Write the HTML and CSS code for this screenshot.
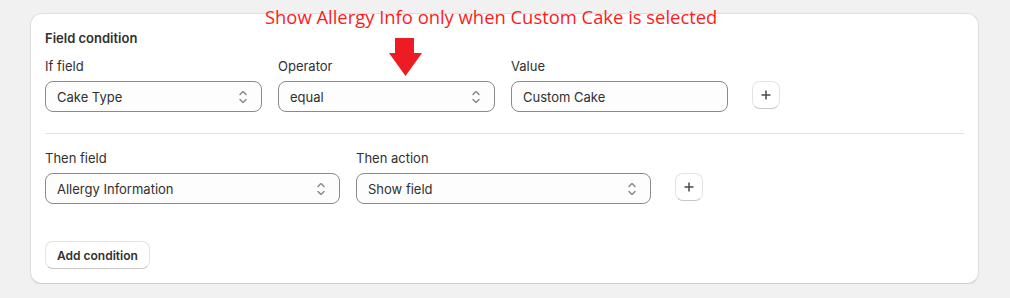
FILE: index.html
```html
<!DOCTYPE html>
<html lang="en">
<head>
    <meta charset="UTF-8">
    <meta name="viewport" content="width=device-width, initial-scale=1.0">
    <title>Field condition</title>
    <link rel="stylesheet" href="styles.css">
</head>
<body>

    <div class="page">
        <div class="card">
            <h3 class="card-title">Field condition</h3>

            <!-- If condition -->
            <div class="row">
                <div class="field narrow">
                    <label>If field</label>
                    <div class="select">
                        <span>Cake Type</span>
                        <svg class="select-icon" viewBox="0 0 20 20"><path d="M10.884 4.323a1.25 1.25 0 0 0-1.768 0l-2.646 2.647a.75.75 0 0 0 1.06 1.06l2.47-2.47 2.47 2.47a.75.75 0 1 0 1.06-1.06l-2.646-2.647Z"/><path d="m13.53 13.03-2.646 2.647a1.25 1.25 0 0 1-1.768 0l-2.646-2.647a.75.75 0 0 1 1.06-1.06l2.47 2.47 2.470-2.47a.75.75 0 0 1 1.06 1.06Z"/></svg>
                    </div>
                </div>
                <div class="field narrow">
                    <label>Operator</label>
                    <div class="select">
                        <span>equal</span>
                        <svg class="select-icon" viewBox="0 0 20 20"><path d="M10.884 4.323a1.25 1.25 0 0 0-1.768 0l-2.646 2.647a.75.75 0 0 0 1.06 1.06l2.47-2.47 2.47 2.47a.75.75 0 1 0 1.06-1.06l-2.646-2.647Z"/><path d="m13.53 13.03-2.646 2.647a1.25 1.25 0 0 1-1.768 0l-2.646-2.647a.75.75 0 0 1 1.06-1.06l2.47 2.47 2.47-2.47a.75.75 0 0 1 1.06 1.06Z"/></svg>
                    </div>
                </div>
                <div class="field narrow">
                    <label>Value</label>
                    <div class="select text-input">
                        <span>Custom Cake</span>
                    </div>
                </div>
                <button class="icon-btn">
                    <svg viewBox="0 0 12 12"><path d="M6 1.5v9M1.5 6h9"/></svg>
                </button>
            </div>

            <hr class="divider">

            <!-- Then action -->
            <div class="row">
                <div class="field wide">
                    <label>Then field</label>
                    <div class="select">
                        <span>Allergy Information</span>
                        <svg class="select-icon" viewBox="0 0 20 20"><path d="M10.884 4.323a1.25 1.25 0 0 0-1.768 0l-2.646 2.647a.75.75 0 0 0 1.06 1.06l2.47-2.47 2.47 2.47a.75.75 0 1 0 1.06-1.06l-2.646-2.647Z"/><path d="m13.53 13.03-2.646 2.647a1.25 1.25 0 0 1-1.768 0l-2.646-2.647a.75.75 0 0 1 1.06-1.06l2.47 2.47 2.47-2.47a.75.75 0 0 1 1.06 1.06Z"/></svg>
                    </div>
                </div>
                <div class="field wide">
                    <label>Then action</label>
                    <div class="select">
                        <span>Show field</span>
                        <svg class="select-icon" viewBox="0 0 20 20"><path d="M10.884 4.323a1.25 1.25 0 0 0-1.768 0l-2.646 2.647a.75.75 0 0 0 1.06 1.06l2.47-2.47 2.47 2.47a.75.75 0 1 0 1.06-1.06l-2.646-2.647Z"/><path d="m13.53 13.03-2.646 2.647a1.25 1.25 0 0 1-1.768 0l-2.646-2.647a.75.75 0 0 1 1.06-1.06l2.47 2.47 2.47-2.47a.75.75 0 0 1 1.06 1.06Z"/></svg>
                    </div>
                </div>
                <button class="icon-btn">
                    <svg viewBox="0 0 12 12"><path d="M6 1.5v9M1.5 6h9"/></svg>
                </button>
            </div>

            <button class="btn">Add condition</button>
        </div>

        <!-- annotation drawn over the screenshot -->
        <div class="note">Show Allergy Info only when Custom Cake is selected</div>
        <svg class="note-arrow" viewBox="0 0 33 38"><polygon points="6,0 25,0 25,15 33,15 16.5,38 0,15 6,15"/></svg>
    </div>

</body>
</html>
```

FILE: styles.css
```css
body {
    margin: 0;
    background-color: #f1f1f1;
    font-family: Inter, "Noto Sans", sans-serif;
    font-size: 13px;
    line-height: 20px;
    color: #303030;
}
.page {
    position: relative;
    padding: 13px 31px 0 30px;
}
.card {
    background-color: white;
    border: 1px solid #dedede;
    border-bottom-color: #cfcfcf;
    border-radius: 12px;
    padding: 14px;
    box-shadow: 0 1px 0 rgba(26, 26, 26, 0.07);
}
.card-title {
    margin: 0 0 8px;
    font-size: 13px;
    line-height: 20px;
    font-weight: 600;
}
.row {
    display: flex;
    align-items: flex-end;
    gap: 16px;
}
.row .icon-btn {
    margin-left: 8px;
    align-self: flex-end;
    margin-bottom: 3px;
}
.field label {
    display: block;
    margin-bottom: 5px;
}
.narrow {
    width: 217px;
}
.wide {
    width: 295px;
}
.select {
    display: flex;
    align-items: center;
    justify-content: space-between;
    box-sizing: border-box;
    height: 31px;
    padding: 0 8px 0 11px;
    border: 1px solid #8a8a8a;
    border-radius: 8px;
    background-color: #fdfdfd;
}
.select-icon {
    width: 20px;
    height: 20px;
    fill: #8a8a8a;
}
.divider {
    border: none;
    border-top: 1px solid #e3e3e3;
    margin: 21px 0 14px;
}
.icon-btn {
    width: 28px;
    height: 28px;
    padding: 0;
    display: flex;
    align-items: center;
    justify-content: center;
    background-color: white;
    border: 1px solid #e3e3e3;
    border-bottom-color: #c6c6c6;
    border-radius: 8px;
}
.icon-btn svg {
    width: 12px;
    height: 12px;
    stroke: #4a4a4a;
    stroke-width: 1.5;
    fill: none;
}
.btn {
    display: block;
    margin-top: 37px;
    height: 28px;
    padding: 0 11px;
    font-family: Inter, "Noto Sans", sans-serif;
    font-size: 12px;
    font-weight: 600;
    color: #303030;
    background-color: white;
    border: 1px solid #e3e3e3;
    border-bottom-color: #c6c6c6;
    border-radius: 8px;
}
.note {
    position: absolute;
    left: 265px;
    top: 7px;
    font-family: "Open Sans", sans-serif;
    font-size: 18.4px;
    line-height: 20px;
    color: #ff1a1a;
    white-space: nowrap;
}
.note-arrow {
    position: absolute;
    left: 389px;
    top: 38px;
    width: 33px;
    height: 38px;
    fill: #ed1c24;
}
```
